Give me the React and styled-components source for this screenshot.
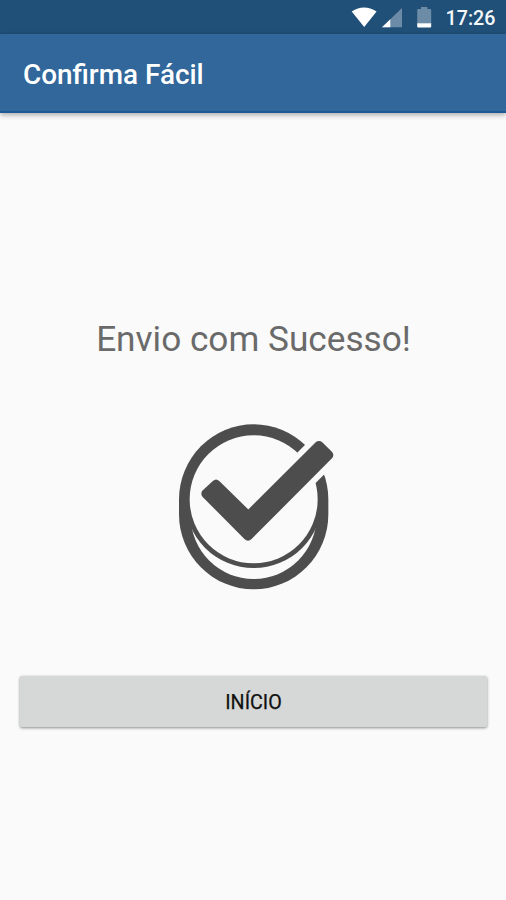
import React from "react";
import styled, { createGlobalStyle } from "styled-components";

const GlobalStyle = createGlobalStyle`
  * { box-sizing: border-box; }
  body { margin: 0; background: #fafafa; font-family: Roboto, sans-serif; }
`;

const Screen = styled.div`
  width: 506px;
  height: 900px;
  display: flex;
  flex-direction: column;
  overflow: hidden;
  background: #fafafa;
`;

const StatusBar = styled.div`
  flex: none;
  height: 34px;
  background: #204f78;
  display: flex;
  justify-content: flex-end;
`;

const StatusIcons = styled.svg`
  display: block;
  width: 100px;
  height: 34px;
`;

const Clock = styled.time`
  width: 66px;
  padding-left: 5.5px;
  color: #f4f8fb;
  font-size: 19.7px;
  font-weight: 500;
  line-height: 38px;
  white-space: nowrap;
`;

const AppBar = styled.header`
  flex: none;
  height: 79px;
  padding-left: 23px;
  display: flex;
  align-items: center;
  background: #31679b;
  border-bottom: 2px solid #1b5a92;
  box-shadow: 0 2px 5px rgba(0, 0, 0, 0.32);
`;

const Title = styled.h1`
  margin: 5px 0 0;
  color: #fff;
  font-size: 27.9px;
  font-weight: 500;
  line-height: 36px;
  white-space: nowrap;
`;

const Content = styled.main`
  flex: 1;
  display: flex;
  flex-direction: column;
  align-items: center;
  padding: 204px 19px 0 20px;
`;

const Message = styled.p`
  margin: 0;
  height: 44px;
  color: #6a6a6a;
  font-size: 35.2px;
  font-weight: 400;
  line-height: 44px;
  white-space: nowrap;
`;

const SuccessIcon = styled.svg`
  display: block;
  width: 180px;
  height: 190px;
  margin: 49px 0 0 3px;
`;

const Button = styled.button`
  width: 467px;
  height: 51px;
  margin: 76px 0 0;
  padding: 0;
  border: 0;
  border-radius: 2px;
  background: #d6d8d7;
  color: #111;
  font: 400 19.7px/53px Roboto, sans-serif;
  -webkit-text-stroke: 0.25px #111;
  box-shadow: 0 1px 3px rgba(0, 0, 0, 0.45);
`;

export default function App() {
  return (
    <>
      <GlobalStyle />
      <Screen>
        <StatusBar>
          <StatusIcons viewBox="340 0 100 34" aria-hidden="true">
            <path d="M351.7 11.5Q364 3.5 376.6 11.5L364.2 27Z" fill="#fff" />
            <path d="M402 8V27.2H382Z" fill="#6b8ba7" />
            <path d="M390.3 19.2V27.2H382Z" fill="#fff" />
            <path d="M417.2 10Q417.2 9 418.2 9H421V7H427.4V9H430.2Q431.2 9 431.2 10V23.5H417.2Z" fill="#6b8ba7" />
            <path d="M417.2 23.3H431.2V26.5Q431.2 27.6 430.2 27.6H418.2Q417.2 27.6 417.2 26.5Z" fill="#fff" />
          </StatusIcons>
          <Clock>17:26</Clock>
        </StatusBar>
        <AppBar>
          <Title>Confirma Fácil</Title>
        </AppBar>
        <Content>
          <Message>Envio com Sucesso!</Message>
          <SuccessIcon viewBox="0 0 540 570" aria-hidden="true">
            <path d="M42 268A224 225 0 0 1 490 268V313A224 225 0 0 1 42 313Z" fill="#4d4d4d" />
            <circle cx="266" cy="318" r="189" fill="#fafafa" />
            <circle cx="266" cy="268" r="206" fill="#4d4d4d" />
            <circle cx="266" cy="268" r="192" fill="#fafafa" />
            <path d="M375 150L470 55L540 131L430 241Z" fill="#fafafa" />
            <path d="M123 251L153 223L250 318L462 107L491 135L249 378Z" fill="#4d4d4d" stroke="#4d4d4d" strokeWidth="28" strokeLinejoin="round" />
          </SuccessIcon>
          <Button type="button">INÍCIO</Button>
        </Content>
      </Screen>
    </>
  );
}
